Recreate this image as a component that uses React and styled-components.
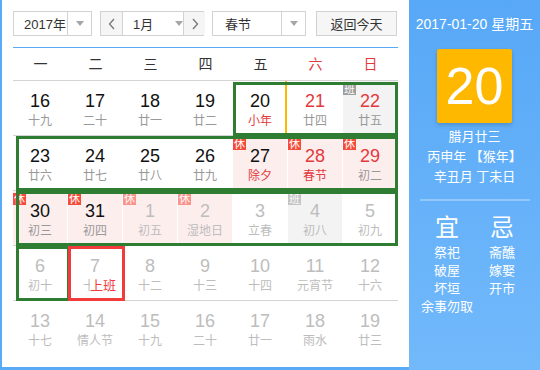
import React from "react";
import styled, { createGlobalStyle, css } from "styled-components";

const GlobalStyle = createGlobalStyle`
  body {
    margin: 0;
    font-family: "Liberation Sans", "Noto Sans CJK SC", sans-serif;
  }
`;

const weekdays = ["一", "二", "三", "四", "五", "六", "日"];

// one entry per week: d = day, l = lunar text
const weeks = [
  [
    { d: 16, l: "十九" },
    { d: 17, l: "二十" },
    { d: 18, l: "廿一" },
    { d: 19, l: "廿二" },
    { d: 20, l: "小年", lred: true, selected: true },
    { d: 21, l: "廿四", red: true },
    { d: 22, l: "廿五", red: true, badge: "班", bg: "grey" },
  ],
  [
    { d: 23, l: "廿六" },
    { d: 24, l: "廿七" },
    { d: 25, l: "廿八" },
    { d: 26, l: "廿九" },
    { d: 27, l: "除夕", lred: true, badge: "休", bg: "pink" },
    { d: 28, l: "春节", red: true, lred: true, badge: "休", bg: "pink" },
    { d: 29, l: "初二", red: true, badge: "休", bg: "pink" },
  ],
  [
    { d: 30, l: "初三", badge: "休", bg: "pink" },
    { d: 31, l: "初四", badge: "休", bg: "pink" },
    { d: 1, l: "初五", faded: true, badge: "休", bg: "pink" },
    { d: 2, l: "湿地日", faded: true, badge: "休", bg: "pink" },
    { d: 3, l: "立春", faded: true },
    { d: 4, l: "初八", faded: true, badge: "班", bg: "grey" },
    { d: 5, l: "初九", faded: true },
  ],
  [
    { d: 6, l: "初十", faded: true },
    { d: 7, l: "十一", faded: true, mark: "上班" },
    { d: 8, l: "十二", faded: true },
    { d: 9, l: "十三", faded: true },
    { d: 10, l: "十四", faded: true },
    { d: 11, l: "元宵节", faded: true },
    { d: 12, l: "十六", faded: true },
  ],
  [
    { d: 13, l: "十七", faded: true },
    { d: 14, l: "情人节", faded: true },
    { d: 15, l: "十九", faded: true },
    { d: 16, l: "二十", faded: true },
    { d: 17, l: "廿一", faded: true },
    { d: 18, l: "雨水", faded: true },
    { d: 19, l: "廿三", faded: true },
  ],
];

const frames = [
  { week: 0, from: 4, to: 6, color: "#2e7d32" },
  { week: 1, from: 0, to: 6, color: "#2e7d32" },
  { week: 2, from: 0, to: 6, color: "#2e7d32" },
  { week: 3, from: 0, to: 0, color: "#2e7d32" },
  { week: 3, from: 1, to: 1, color: "#f23b3b" },
];

const COL = 55;

const Page = styled.div`
  display: flex;
  width: 540px;
  height: 370px;
  overflow: hidden;
`;

const Main = styled.div`
  width: 409px;
  height: 370px;
  box-sizing: border-box;
  border-left: 2px solid #5aabf7;
  border-bottom: 3px solid #5aabf7;
  padding: 11px 0 0 11px;
  background: #fff;
`;

const Toolbar = styled.div`
  display: flex;
  height: 25px;
  gap: 8px;
  padding-bottom: 11px;
  border-bottom: 1px solid #5aabf7;
  width: 385px;
`;

const SelectBox = styled.div`
  display: flex;
  flex: none;
  width: ${(p) => p.$w}px;
  box-sizing: border-box;
  border: 1px solid #d2d2d2;
  background: #fff;
  font-size: 13px;
  color: #333;
`;

const SelectLabel = styled.div`
  flex: 1;
  display: flex;
  align-items: center;
  white-space: nowrap;
  padding-left: ${(p) => p.$pad || 10}px;
`;

const ArrowCell = styled.div`
  width: 23px;
  flex: none;
  display: flex;
  align-items: center;
  justify-content: center;
  border-left: 1px solid #d2d2d2;
  &::after {
    content: "";
    border-left: 4px solid transparent;
    border-right: 4px solid transparent;
    border-top: 5px solid #a6a6a6;
  }
`;

const MonthGroup = styled.div`
  display: flex;
  flex: none;
  width: 104px;
  box-sizing: border-box;
  border: 1px solid #d2d2d2;
  font-size: 13px;
  color: #333;
`;

const NavBtn = styled.div`
  width: 21px;
  flex: none;
  display: flex;
  align-items: center;
  justify-content: center;
  background: #f5f5f5;
  ${(p) =>
    p.$side === "left"
      ? css`border-right: 1px solid #d2d2d2;`
      : css`border-left: 1px solid #d2d2d2;`}
`;

const MonthLabel = styled.div`
  flex: 1;
  display: flex;
  align-items: center;
  white-space: nowrap;
  padding-left: 10px;
  gap: 22px;
  &::after {
    content: "";
    border-left: 4px solid transparent;
    border-right: 4px solid transparent;
    border-top: 5px solid #a6a6a6;
  }
`;

const TodayBtn = styled.div`
  margin-left: 2px;
  width: 81px;
  flex: none;
  box-sizing: border-box;
  border: 1px solid #d2d2d2;
  background: #f6f6f6;
  display: flex;
  align-items: center;
  justify-content: center;
  white-space: nowrap;
  font-size: 13px;
  color: #333;
`;

const Head = styled.div`
  display: grid;
  grid-template-columns: repeat(7, ${COL}px);
  height: 32px;
  border-bottom: 1px solid #d4d4d4;
  width: 385px;
`;

const HeadCell = styled.div`
  text-align: center;
  line-height: 32px;
  font-size: 14px;
  color: ${(p) => (p.$red ? "#e4393c" : "#333")};
`;

const Week = styled.div`
  position: relative;
  display: grid;
  grid-template-columns: repeat(7, ${COL}px);
  height: 55px;
  width: 385px;
  box-sizing: border-box;
  border-bottom: ${(p) => (p.$last ? "none" : "1px solid #d4d4d4")};
`;

const bgs = { pink: "#fdeeee", grey: "#f3f3f3" };

const Cell = styled.div`
  position: relative;
  display: flex;
  flex-direction: column;
  align-items: center;
  padding-top: 9px;
  box-sizing: border-box;
  border-right: 1px solid #fff;
  background: ${(p) => bgs[p.$bg] || "#fff"};
  ${(p) =>
    p.$selected &&
    css`
      box-shadow: inset -2px -2px 0 #ffb800;
    `}
`;

const Num = styled.div`
  font-size: 18px;
  line-height: 22px;
  color: ${(p) => (p.$faded ? "#bdbdbd" : p.$red ? "#e4393c" : "#111")};
`;

const Lunar = styled.div`
  font-size: 12px;
  line-height: 18px;
  white-space: nowrap;
  color: ${(p) => (p.$faded ? "#bdbdbd" : p.$red ? "#e4393c" : "#999")};
`;

const Badge = styled.span`
  position: absolute;
  top: 2px;
  left: 0;
  width: 13px;
  height: 12px;
  font-size: 11px;
  line-height: 12px;
  text-align: center;
  color: #fff;
  background: ${(p) => (p.$kind === "休" ? "#f54b3b" : "#9e9e9e")};
  opacity: ${(p) => (p.$faded ? 0.55 : 1)};
`;

const WorkMark = styled.span`
  position: absolute;
  left: 22px;
  top: 32px;
  font-size: 13px;
  line-height: 16px;
  color: #f23b3b;
  background: #fff;
`;

const Frame = styled.div`
  position: absolute;
  top: 0;
  bottom: -1px;
  box-sizing: border-box;
  border: 3px solid ${(p) => p.$color};
  z-index: 2;
  pointer-events: none;
`;

const Side = styled.div`
  flex: 1;
  background: linear-gradient(#57a8f7, #72b9fb);
  color: #fff;
  display: flex;
  flex-direction: column;
  align-items: center;
  padding-top: 14px;
`;

const DateLine = styled.div`
  font-size: 14px;
  line-height: 20px;
  white-space: nowrap;
`;

const DayBox = styled.div`
  margin-top: 15px;
  width: 75px;
  height: 74px;
  background: #ffb800;
  border-radius: 2px;
  box-shadow: 0 2px 4px rgba(0, 0, 0, 0.18);
  display: flex;
  align-items: center;
  justify-content: center;
  font-size: 52px;
`;

const InfoLines = styled.div`
  margin-top: 4px;
  text-align: center;
  font-size: 13px;
  line-height: 20px;
  white-space: nowrap;
`;

const Divider = styled.div`
  margin-top: 12px;
  width: 110px;
  height: 2px;
  background: rgba(255, 255, 255, 0.3);
`;

const Advice = styled.div`
  margin-top: 12px;
  width: 110px;
  display: grid;
  grid-template-columns: 55px 55px;
`;

const AdviceCol = styled.div`
  display: flex;
  flex-direction: column;
  align-items: center;
`;

const AdviceTitle = styled.div`
  font-size: 24px;
  line-height: 30px;
  margin-bottom: 1px;
`;

const AdviceItem = styled.div`
  font-size: 13px;
  line-height: 18px;
  white-space: nowrap;
`;

const Chevron = ({ dir }) => (
  <svg width="8" height="12" viewBox="0 0 8 12">
    <polyline
      points={dir === "left" ? "6,1 1.5,6 6,11" : "2,1 6.5,6 2,11"}
      fill="none"
      stroke="#777"
      strokeWidth="1.3"
    />
  </svg>
);

const App = () => {
  return (
    <Page>
      <GlobalStyle />
      <Main>
        <Toolbar>
          <SelectBox $w={79}>
            <SelectLabel>2017年</SelectLabel>
            <ArrowCell />
          </SelectBox>
          <MonthGroup>
            <NavBtn $side="left">
              <Chevron dir="left" />
            </NavBtn>
            <MonthLabel>1月</MonthLabel>
            <NavBtn $side="right">
              <Chevron dir="right" />
            </NavBtn>
          </MonthGroup>
          <SelectBox $w={94}>
            <SelectLabel $pad={12}>春节</SelectLabel>
            <ArrowCell />
          </SelectBox>
          <TodayBtn>返回今天</TodayBtn>
        </Toolbar>
        <Head>
          {weekdays.map((w, i) => (
            <HeadCell key={w} $red={i > 4}>
              {w}
            </HeadCell>
          ))}
        </Head>
        {weeks.map((week, wi) => (
          <Week key={wi} $last={wi === weeks.length - 1}>
            {week.map((c, ci) => (
              <Cell key={ci} $bg={c.bg} $selected={c.selected}>
                {c.badge && (
                  <Badge $kind={c.badge} $faded={c.faded}>
                    {c.badge}
                  </Badge>
                )}
                <Num $red={c.red} $faded={c.faded}>
                  {c.d}
                </Num>
                <Lunar $red={c.lred} $faded={c.faded}>
                  {c.l}
                </Lunar>
                {c.mark && <WorkMark>{c.mark}</WorkMark>}
              </Cell>
            ))}
            {frames
              .filter((f) => f.week === wi)
              .map((f, i) => {
                const left = f.from === 0 ? 3 : f.from * COL;
                const width = (f.to + 1) * COL - left + (f.to === 6 ? 0 : 2);
                return (
                  <Frame
                    key={i}
                    $color={f.color}
                    style={{ left, width, top: wi === 0 ? 1 : 0 }}
                  />
                );
              })}
          </Week>
        ))}
      </Main>
      <Side>
        <DateLine>2017-01-20 星期五</DateLine>
        <DayBox>20</DayBox>
        <InfoLines>
          <div>腊月廿三</div>
          <div>丙申年 【猴年】</div>
          <div>辛丑月 丁未日</div>
        </InfoLines>
        <Divider />
        <Advice>
          <AdviceCol>
            <AdviceTitle>宜</AdviceTitle>
            <AdviceItem>祭祀</AdviceItem>
            <AdviceItem>破屋</AdviceItem>
            <AdviceItem>坏垣</AdviceItem>
            <AdviceItem>余事勿取</AdviceItem>
          </AdviceCol>
          <AdviceCol>
            <AdviceTitle>忌</AdviceTitle>
            <AdviceItem>斋醮</AdviceItem>
            <AdviceItem>嫁娶</AdviceItem>
            <AdviceItem>开市</AdviceItem>
          </AdviceCol>
        </Advice>
      </Side>
    </Page>
  );
};

export default App;
